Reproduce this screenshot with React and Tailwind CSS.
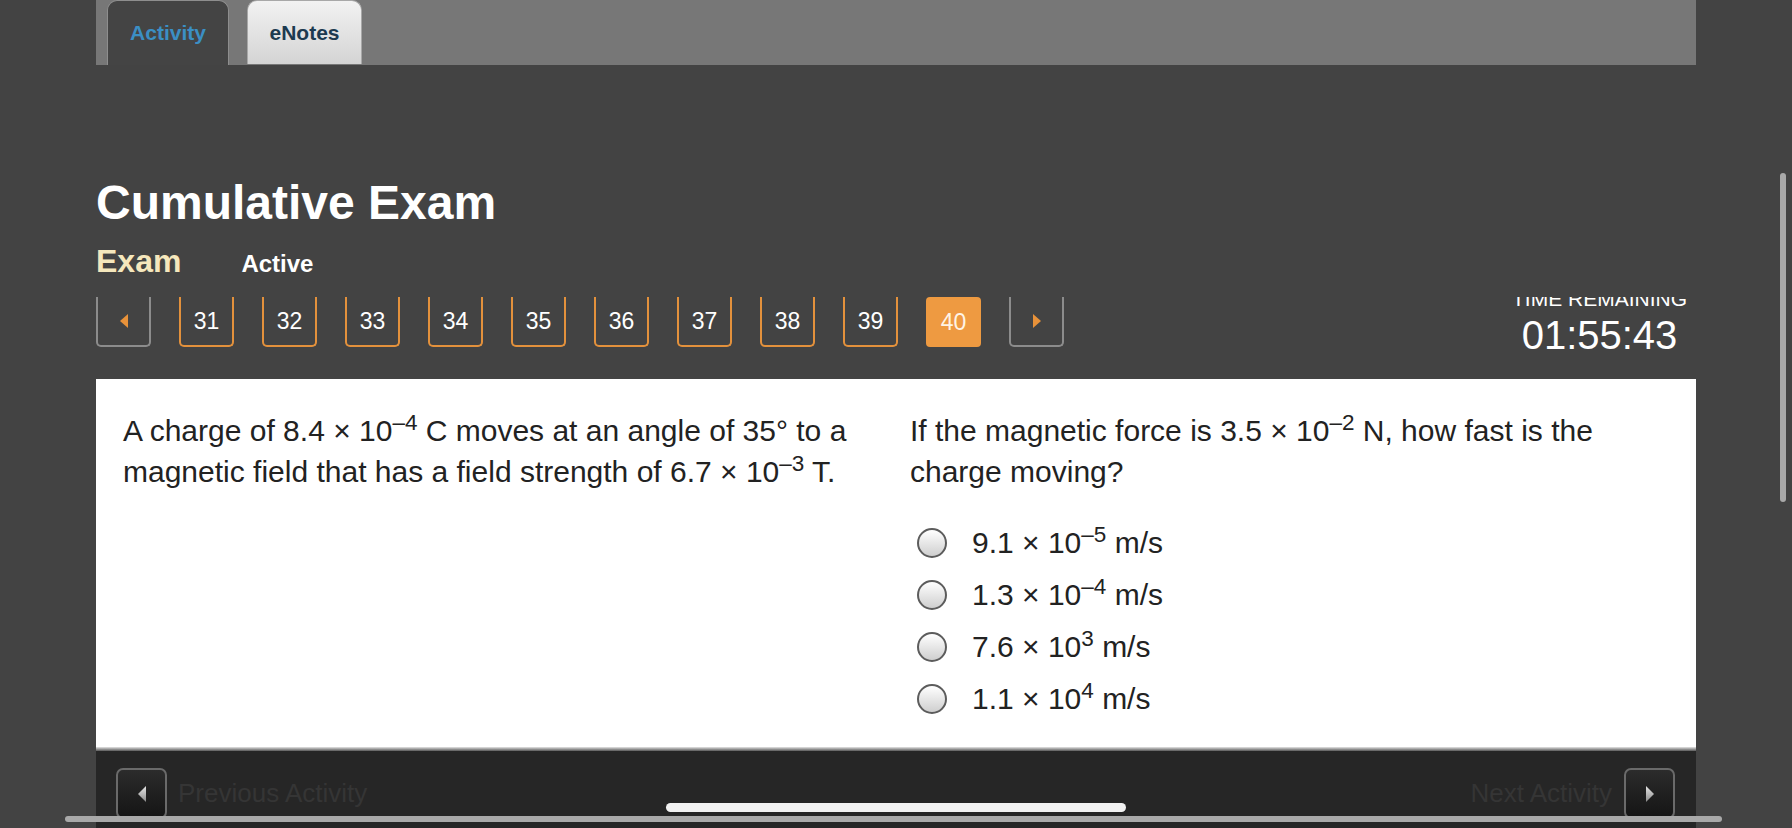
import React from "react"

const pages = [31, 32, 33, 34, 35, 36, 37, 38, 39, 40]

const options = [
  { base: "9.1", exp: "–5" },
  { base: "1.3", exp: "–4" },
  { base: "7.6", exp: "3" },
  { base: "1.1", exp: "4" },
]

function Tri({ dir = "left", fill = "#e8923a" }) {
  return (
    <svg width="10" height="16" viewBox="0 0 10 16">
      {dir === "left" ? <path d="M9 1 L1 8 L9 15 Z" fill={fill} /> : <path d="M1 1 L9 8 L1 15 Z" fill={fill} />}
    </svg>
  )
}

function FooterTri({ dir }) {
  const id = "ft-" + dir
  return (
    <svg width="12" height="20" viewBox="0 0 12 20">
      <defs>
        <linearGradient id={id} x1="0" y1="0" x2="0" y2="1">
          <stop offset="0" stopColor="#e6e6e6" />
          <stop offset="1" stopColor="#8a8a8a" />
        </linearGradient>
      </defs>
      {dir === "left" ? <path d="M10 2 L2 10 L10 18 Z" fill={`url(#${id})`} /> : <path d="M2 2 L10 10 L2 18 Z" fill={`url(#${id})`} />}
    </svg>
  )
}

function Radio() {
  return (
    <span className="block w-[30px] h-[30px] rounded-full border-2 border-[#5c5c5c] bg-gradient-to-b from-white to-[#cfcfcf] shrink-0" />
  )
}

export default function App() {
  return (
    <div className="relative w-[1792px] h-[828px] overflow-hidden bg-[#434343] font-['Liberation_Sans',Arial,sans-serif]">
      <div className="mx-[96px] w-[1600px] flex flex-col">
        {/* tab strip */}
        <div className="h-[65px] bg-[#777777] flex items-end pl-[11px] gap-[18px]">
          <div className="w-[122px] h-[65px] rounded-t-[10px] bg-[#444444] border-x border-t border-[#8e8e8e] flex items-center justify-center">
            <span className="text-[21px] font-bold text-[#3b8fc4]">Activity</span>
          </div>
          <div className="w-[115px] h-[64px] rounded-t-[10px] bg-gradient-to-b from-[#f2f2f2] to-[#d4d4d4] border-x border-t border-[#a8a8a8] flex items-center justify-center mb-[1px]">
            <span className="text-[21px] font-bold text-[#1c3a50]">eNotes</span>
          </div>
        </div>

        <h1 className="mt-[114px] text-[48px] leading-none font-bold text-white">Cumulative Exam</h1>

        <div className="mt-[18px] flex items-baseline h-[32px]">
          <span className="text-[32px] leading-none font-bold text-[#f5e7bc]">Exam</span>
          <span className="ml-[60px] text-[24px] leading-none font-bold text-white">Active</span>
        </div>

        {/* question nav */}
        <div className="mt-[20px] h-[82px] overflow-hidden flex justify-between">
          <div className="flex gap-[28px] items-start">
            <div className="w-[55px] h-[50px] border-x-2 border-b-2 border-[#8c8c8c] rounded-b-[5px] flex items-center justify-center">
              <Tri dir="left" />
            </div>
            {pages.map((n) =>
              n === 40 ? (
                <div key={n} className="w-[55px] h-[50px] bg-[#ee9a41] rounded-[4px] flex items-center justify-center text-[23px] text-[#fff4e6]">
                  {n}
                </div>
              ) : (
                <div key={n} className="w-[55px] h-[50px] border-x-2 border-b-2 border-[#e3913c] rounded-b-[5px] flex items-center justify-center text-[23px] text-white">
                  {n}
                </div>
              )
            )}
            <div className="w-[55px] h-[50px] border-x-2 border-b-2 border-[#8c8c8c] rounded-b-[5px] flex items-center justify-center">
              <Tri dir="right" />
            </div>
          </div>
          <div className="mr-[9px] w-[175px] -mt-[9px] flex flex-col items-center text-white">
            <span className="text-[21px] leading-none whitespace-nowrap">TIME REMAINING</span>
            <span className="mt-[6px] text-[40px] leading-none">01:55:43</span>
          </div>
        </div>

        {/* question panel */}
        <div className="h-[368px] bg-white px-[27px] pt-[31px] flex text-[#222222]">
          <div className="w-[787px] pr-[20px]">
            <p className="text-[30px] leading-[41px]">
              A charge of 8.4 × 10<sup>–4</sup> C moves at an angle of 35° to a magnetic field that has a field strength of 6.7 × 10<sup>–3</sup> T.
            </p>
          </div>
          <div className="w-[740px]">
            <p className="text-[30px] leading-[41px]">
              If the magnetic force is 3.5 × 10<sup>–2</sup> N, how fast is the charge moving?
            </p>
            <div className="mt-[25px] flex flex-col">
              {options.map((o, i) => (
                <label key={i} className="h-[52px] flex items-center pl-[7px]">
                  <Radio />
                  <span className="ml-[25px] text-[30px] leading-none">
                    {o.base} × 10<sup>{o.exp}</sup> m/s
                  </span>
                </label>
              ))}
            </div>
          </div>
        </div>
        <div className="h-[4px] bg-gradient-to-b from-[#e6e6e6] to-[#5a5a5a]" />

        {/* footer */}
        <div className="h-[79px] bg-[#262626] flex justify-between pt-[17px] px-[20px]">
          <div className="flex items-start gap-[11px]">
            <div className="w-[51px] h-[51px] rounded-[7px] border-2 border-[#6a6a6a] bg-gradient-to-b from-[#2c2c2c] to-[#151515] flex items-center justify-center">
              <FooterTri dir="left" />
            </div>
            <span className="h-[51px] flex items-center text-[26px] text-[#353535]">Previous Activity</span>
          </div>
          <div className="flex items-start gap-[12px] pr-[1px]">
            <span className="h-[51px] flex items-center text-[26px] text-[#353535]">Next Activity</span>
            <div className="w-[51px] h-[51px] rounded-[7px] border-2 border-[#6a6a6a] bg-gradient-to-b from-[#2c2c2c] to-[#151515] flex items-center justify-center">
              <FooterTri dir="right" />
            </div>
          </div>
        </div>
      </div>

      {/* overlay scrollbars and home indicator */}
      <div className="absolute left-[1780px] top-[173px] w-[6px] h-[329px] rounded-full bg-[#a9a9a9]" />
      <div className="absolute left-[65px] top-[816px] w-[1657px] h-[6px] rounded-full bg-[#a9a9a9]" />
      <div className="absolute left-[666px] top-[803px] w-[460px] h-[9px] rounded-full bg-[#f2f2f2]" />
    </div>
  )
}
